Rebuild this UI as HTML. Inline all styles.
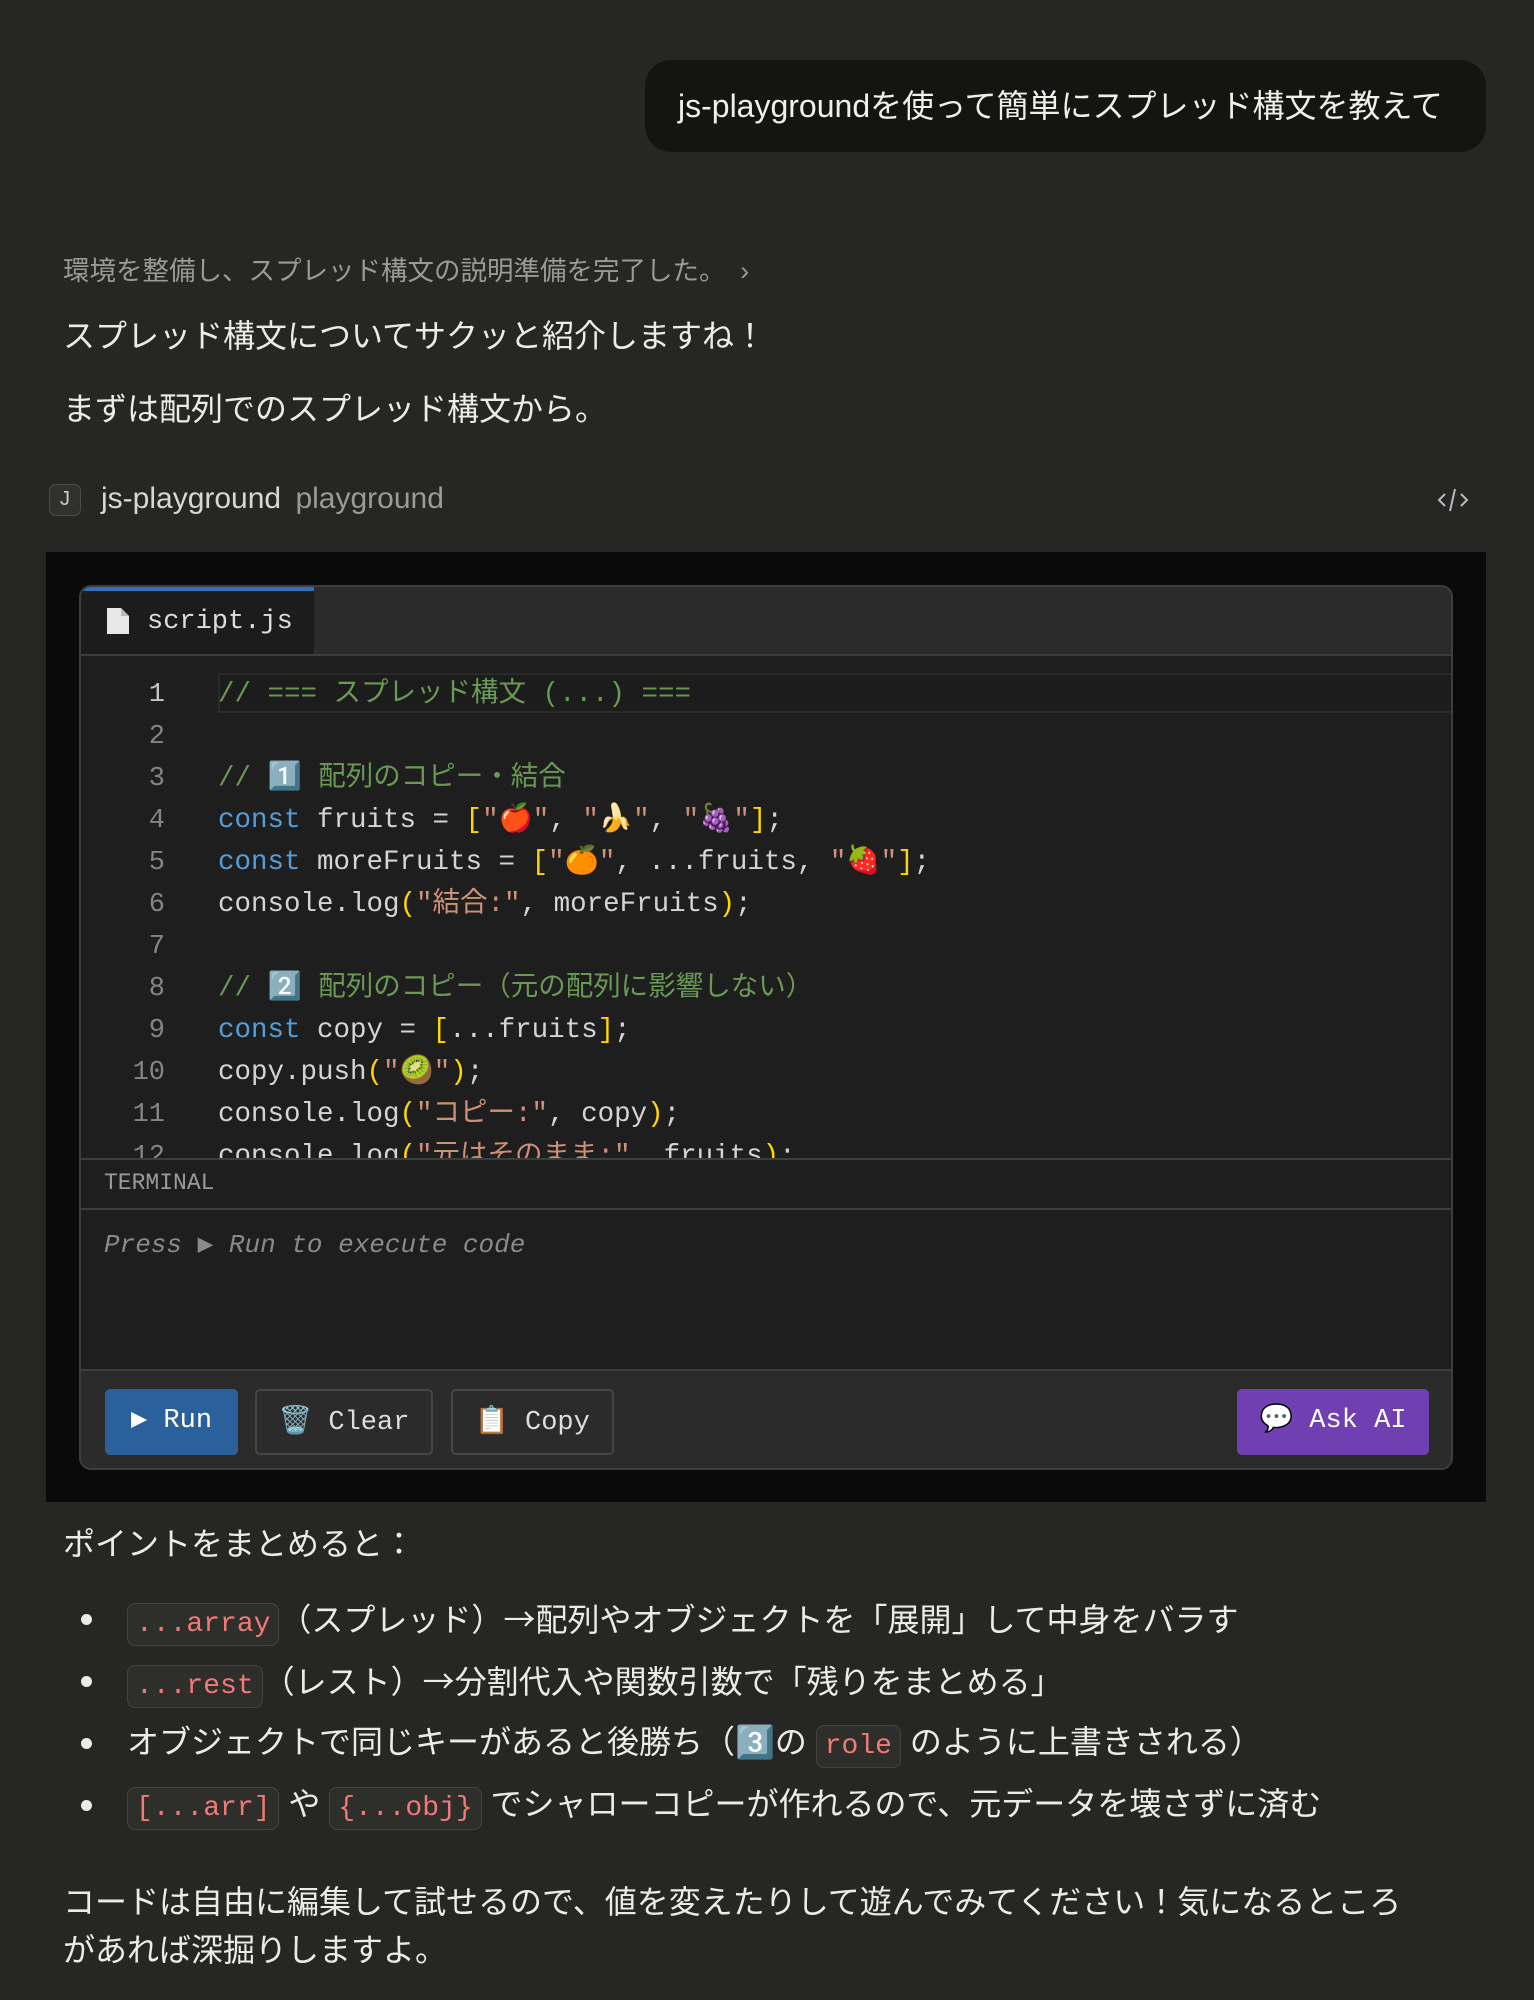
<!DOCTYPE html>
<html><head><meta charset="utf-8">
<style>
*{margin:0;padding:0;box-sizing:border-box}
body{width:1534px;height:2000px;background:#262624;color:#ecebe6;font-family:"Liberation Sans","Noto Sans CJK JP",sans-serif;position:relative;overflow:hidden}
.abs{position:absolute}
.t{font-size:32px;white-space:nowrap;line-height:1}
.bubble{left:645px;top:60px;width:841px;height:92px;background:#141413;border-radius:26px;font-size:32px;color:#f0efe9;padding-left:33px;line-height:92px;white-space:nowrap}
.mono{font-family:"Liberation Mono","DejaVu Sans Mono","Noto Sans CJK JP",monospace}
.black{left:46px;top:552px;width:1440px;height:950px;background:#0a0a0a}
.panel{left:79px;top:585px;width:1374px;height:885px;background:#1e1e1e;border:2px solid #3d3d3d;border-radius:12px;overflow:hidden}
.tabbar{left:0;top:0;width:100%;height:69px;background:#2b2b2b;border-bottom:2px solid #3d3d3d}
.tab{left:0;top:0;width:233px;height:67px;background:#1c1c1c;border-top:4px solid #2f6fc0;color:#ddd;font-size:27px;line-height:63px;padding-left:66px}
.code{left:0;top:69px;width:100%;height:503px;overflow:hidden}
.ln{position:absolute;left:0;width:84px;text-align:right;color:#858585;font-size:27px;line-height:42px}
.cl{position:absolute;left:137px;font-size:27.5px;line-height:42px;color:#d4d4d4;white-space:pre}
.c{color:#6a9955}.k{color:#569cd6}.s{color:#ce9178}.b{color:#ffd700}
.term{left:0;top:571px;width:100%;height:211px;border-top:2px solid #3d3d3d}
.tb{left:0;top:782px;width:100%;height:103px;background:#2b2b2b;border-top:2px solid #3d3d3d}
.btn{position:absolute;top:18px;height:66px;border-radius:5px;font-size:27px;line-height:64px;color:#ddd;text-align:center;white-space:nowrap}
.ic{font-family:"Liberation Mono",monospace;font-size:28px;color:#f07a78;background:#2e2e2b;border:1.5px solid #43433f;border-radius:8px;padding:5px 8px}
.ar{font-family:"Noto Sans CJK JP",sans-serif}
ul{list-style:none}
li{position:absolute;left:127px;font-size:32px;white-space:nowrap;line-height:1}
li:before{content:"";position:absolute;left:-46px;top:12px;width:11px;height:11px;border-radius:50%;background:#ecebe6}
</style></head><body>
<div class="abs bubble">js-playgroundを使って簡単にスプレッド構文を教えて</div>
<div class="abs t" style="left:63px;top:258px;font-size:26.5px;color:#9b9a94">環境を整備し、スプレッド構文の説明準備を完了した。 &nbsp;›</div>
<div class="abs t" style="left:63px;top:320px">スプレッド構文についてサクッと紹介しますね！</div>
<div class="abs t" style="left:63px;top:393px">まずは配列でのスプレッド構文から。</div>
<div class="abs" style="left:49px;top:484px;width:32px;height:32px;border:1.5px solid #4a4a46;border-radius:7px;background:#30302d;color:#ccc;font-size:20px;text-align:center;line-height:29px">J</div>
<div class="abs t" style="left:101px;top:484px;font-size:30px;color:#d8d7d0">js-playground <span style="color:#9b9a94;margin-left:6px">playground</span></div>
<svg class="abs" style="left:1436px;top:486px" width="34" height="28" viewBox="0 0 34 28"><path d="M9 8 3 14l6 6M25 8l6 6-6 6M19 3l-5 22" stroke="#bbb" stroke-width="2" fill="none"/></svg>
<div class="abs black"></div>
<div class="abs panel">
 <div class="abs tabbar"><div class="abs tab mono">script.js</div>
  <svg class="abs" style="left:24px;top:20px" width="26" height="28" viewBox="0 0 26 28"><path d="M2 1h14l8 8v18H2z" fill="#e8e8e8"/><path d="M16 1v8h8" fill="#bbb"/></svg></div>
 <div class="abs code mono">
  <div class="abs" style="left:137px;top:17px;width:1235px;height:40px;border:2px solid #2a2a2a;background:#1c1c1c"></div>
  <div class="ln" style="top:18px;color:#c6c6c6">1</div><div class="ln" style="top:60px">2</div><div class="ln" style="top:102px">3</div><div class="ln" style="top:144px">4</div><div class="ln" style="top:186px">5</div><div class="ln" style="top:228px">6</div><div class="ln" style="top:270px">7</div><div class="ln" style="top:312px">8</div><div class="ln" style="top:354px">9</div><div class="ln" style="top:396px">10</div><div class="ln" style="top:438px">11</div><div class="ln" style="top:480px">12</div>
  <div class="cl c" style="top:18px">// === スプレッド構文 (...) ===</div>
  <div class="cl c" style="top:102px">// 1️⃣ 配列のコピー・結合</div>
  <div class="cl" style="top:144px"><span class="k">const</span> fruits = <span class="b">[</span><span class="s">"🍎"</span>, <span class="s">"🍌"</span>, <span class="s">"🍇"</span><span class="b">]</span>;</div>
  <div class="cl" style="top:186px"><span class="k">const</span> moreFruits = <span class="b">[</span><span class="s">"🍊"</span>, ...fruits, <span class="s">"🍓"</span><span class="b">]</span>;</div>
  <div class="cl" style="top:228px">console.log<span class="b">(</span><span class="s">"結合:"</span>, moreFruits<span class="b">)</span>;</div>
  <div class="cl c" style="top:312px">// 2️⃣ 配列のコピー（元の配列に影響しない）</div>
  <div class="cl" style="top:354px"><span class="k">const</span> copy = <span class="b">[</span>...fruits<span class="b">]</span>;</div>
  <div class="cl" style="top:396px">copy.push<span class="b">(</span><span class="s">"🥝"</span><span class="b">)</span>;</div>
  <div class="cl" style="top:438px">console.log<span class="b">(</span><span class="s">"コピー:"</span>, copy<span class="b">)</span>;</div>
  <div class="cl" style="top:480px">console.log<span class="b">(</span><span class="s">"元はそのまま:"</span>, fruits<span class="b">)</span>;</div>
 </div>
 <div class="abs term mono">
  <div class="abs" style="left:23px;top:10px;font-size:23px;color:#9a9a9a">TERMINAL</div>
  <div class="abs" style="left:0;top:48px;width:100%;border-top:2px solid #3d3d3d"></div>
  <div class="abs" style="left:23px;top:69px;font-size:26px;color:#8a8a8a;font-style:italic;white-space:nowrap">Press ▶ Run to execute code</div>
 </div>
 <div class="abs tb mono">
  <div class="btn" style="left:24px;width:133px;background:#2a619c;color:#fff">▶ Run</div>
  <div class="btn" style="left:174px;width:178px;border:2px solid #454545">🗑️ Clear</div>
  <div class="btn" style="left:370px;width:163px;border:2px solid #454545">📋 Copy</div>
  <div class="btn" style="left:1156px;width:192px;background:#7040b2;color:#fff">💬 Ask AI</div>
 </div>
</div>
<div class="abs t" style="left:63px;top:1528px">ポイントをまとめると：</div>
<ul>
<li style="top:1602px"><span class="ic">...array</span>（スプレッド）<span class="ar">→</span>配列やオブジェクトを「展開」して中身をバラす</li>
<li style="top:1664px"><span class="ic">...rest</span>（レスト）<span class="ar">→</span>分割代入や関数引数で「残りをまとめる」</li>
<li style="top:1726px">オブジェクトで同じキーがあると後勝ち（3️⃣の <span class="ic">role</span> のように上書きされる）</li>
<li style="top:1788px"><span class="ic">[...arr]</span> や <span class="ic">{...obj}</span> でシャローコピーが作れるので、元データを壊さずに済む</li>
</ul>
<div class="abs t" style="left:63px;top:1878px;line-height:48px;white-space:normal;width:1370px">コードは自由に編集して試せるので、値を変えたりして遊んでみてください！気になるところがあれば深掘りしますよ。</div>
</body></html>
